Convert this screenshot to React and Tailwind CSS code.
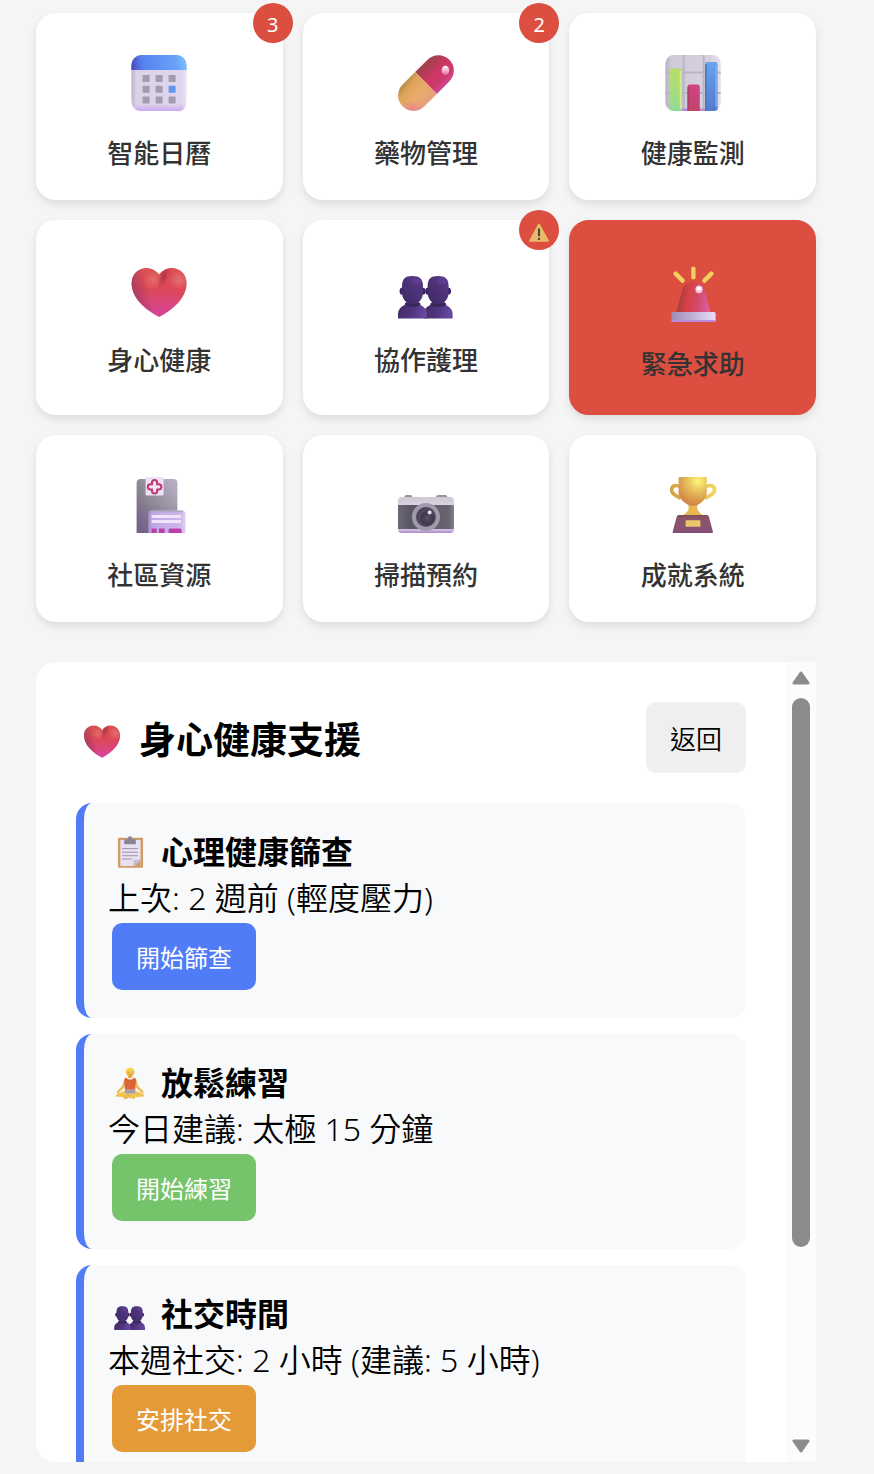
import { useId } from "react";

function Svg({ className, children }) {
  return (
    <svg viewBox="0 0 32 32" className={className} aria-hidden="true">
      {children}
    </svg>
  );
}

function CalendarIcon({ className }) {
  const id = useId();
  return (
    <Svg className={className}>
      <defs>
        <linearGradient id={id + "h"} x1="2" y1="8" x2="30" y2="4" gradientUnits="userSpaceOnUse">
          <stop stopColor="#4a48b8" />
          <stop offset=".2" stopColor="#5580ee" />
          <stop offset=".8" stopColor="#6aa2f8" />
          <stop offset="1" stopColor="#7cc4ff" />
        </linearGradient>
        <linearGradient id={id + "b"} x1="2" y1="0" x2="30" y2="0" gradientUnits="userSpaceOnUse">
          <stop stopColor="#b9b2c4" />
          <stop offset=".1" stopColor="#dbd2e8" />
          <stop offset=".9" stopColor="#dfd5ec" />
          <stop offset="1" stopColor="#eee4f6" />
        </linearGradient>
        <linearGradient id={id + "p"} x1="0" y1="26.5" x2="0" y2="30" gradientUnits="userSpaceOnUse">
          <stop stopColor="#cda8f2" stopOpacity="0" />
          <stop offset="1" stopColor="#cda8f2" />
        </linearGradient>
      </defs>
      <rect x="2.2" y="2" width="27.6" height="28" rx="5" fill={`url(#${id}b)`} />
      <path d="M2.2 26.5h27.6A4 4 0 0 1 25 30H7a4.8 4.8 0 0 1-4.8-3.5Z" fill={`url(#${id}p)`} />
      <path d="M2.2 9.5V7a5 5 0 0 1 5-5h17.6a5 5 0 0 1 5 5v2.5Z" fill={`url(#${id}h)`} />
      <g fill="#a29cb0">
        {[7.8, 14.3, 20.8].map((x) =>
          [12, 17.4, 22.7].map((y) => (
            <rect key={x + "-" + y} x={x} y={y} width="3.5" height="3.5" rx=".3" fill={x > 20 && y > 17 && y < 18 ? "#5f98ee" : "#a29cb0"} />
          ))
        )}
      </g>
    </Svg>
  );
}

function PillIcon({ className }) {
  const id = useId();
  return (
    <Svg className={className}>
      <defs>
        <linearGradient id={id + "r"} x1="0" y1="8.3" x2="0" y2="23.7" gradientUnits="userSpaceOnUse">
          <stop stopColor="#a3434e" />
          <stop offset=".2" stopColor="#ad3d50" />
          <stop offset=".45" stopColor="#cc3763" />
          <stop offset=".8" stopColor="#cf3a70" />
          <stop offset="1" stopColor="#cc4a9a" />
        </linearGradient>
        <linearGradient id={id + "y"} x1="3" y1="8.3" x2="5" y2="23.7" gradientUnits="userSpaceOnUse">
          <stop stopColor="#b58843" />
          <stop offset=".25" stopColor="#dda45c" />
          <stop offset=".65" stopColor="#e9ac6b" />
          <stop offset="1" stopColor="#e6a07c" />
        </linearGradient>
        <radialGradient id={id + "g"} cx="0" cy="22" r="7" gradientUnits="userSpaceOnUse">
          <stop stopColor="#e5789d" />
          <stop offset="1" stopColor="#e5789d" stopOpacity="0" />
        </radialGradient>
        <linearGradient id={id + "w"} x1="0" y1="0" x2="0" y2="1">
          <stop stopColor="#fff" />
          <stop offset="1" stopColor="#e06ba0" />
        </linearGradient>
      </defs>
      <g transform="rotate(-45 16 16)">
        <path d="M16 8.3h8.8a7.7 7.7 0 0 1 0 15.4H16Z" fill={`url(#${id}r)`} />
        <path d="M16 8.3H7.2a7.7 7.7 0 0 0 0 15.4H16Z" fill={`url(#${id}y)`} />
        <path d="M16 8.3H7.2a7.7 7.7 0 0 0 0 15.4H16Z" fill={`url(#${id}g)`} />
      </g>
      <ellipse cx="25.7" cy="9.7" rx="1.9" ry="2.3" fill={`url(#${id}w)`} />
    </Svg>
  );
}

function ChartIcon({ className }) {
  const id = useId();
  return (
    <Svg className={className}>
      <defs>
        <linearGradient id={id + "b"} x1="2" y1="0" x2="30" y2="0" gradientUnits="userSpaceOnUse">
          <stop stopColor="#b5afbf" />
          <stop offset=".12" stopColor="#cfcad8" />
          <stop offset=".8" stopColor="#d6d0df" />
          <stop offset="1" stopColor="#e8dff0" />
        </linearGradient>
        <linearGradient id={id + "g"} x1="0" y1="0" x2="0" y2="1">
          <stop stopColor="#b9de67" />
          <stop offset=".5" stopColor="#a9dc7a" />
          <stop offset="1" stopColor="#8edb9b" />
        </linearGradient>
        <linearGradient id={id + "r"} x1="0" y1="0" x2="0" y2="1">
          <stop stopColor="#d04488" />
          <stop offset="1" stopColor="#c2436a" />
        </linearGradient>
        <linearGradient id={id + "u"} x1="0" y1="0" x2="0" y2="1">
          <stop stopColor="#66a5f0" />
          <stop offset="1" stopColor="#5579cd" />
        </linearGradient>
      </defs>
      <rect x="2.2" y="2" width="27.7" height="28" rx="4.2" fill={`url(#${id}b)`} />
      <path d="M11.3 2v28M21.3 2v28M2.2 10.8h27.7M2.2 21h27.7" stroke="#bab4c4" strokeWidth="1" />
      <path d="M10.5 29.4h3M19 29.4h3.4" stroke="#b58bd8" strokeWidth="1.2" />
      <path d="M4.3 30V10a1.2 1.2 0 0 1 1.2-1.2h3.8a1.2 1.2 0 0 1 1.2 1.2v20H6.2a4 4 0 0 1-1.9-.6Z" fill={`url(#${id}g)`} />
      <path d="M9.8 10v19" stroke="#d2f08a" strokeWidth=".8" />
      <path d="M13.2 30V18a1.2 1.2 0 0 1 1.2-1.2h3.8a1.2 1.2 0 0 1 1.2 1.2v12Z" fill={`url(#${id}r)`} />
      <path d="M13.7 18v12" stroke="#a94163" strokeWidth=".8" />
      <path d="M22 30V6.7a1.2 1.2 0 0 1 1.2-1.2h3.9a1.2 1.2 0 0 1 1.2 1.2v22.7a4 4 0 0 1-2.2.6Z" fill={`url(#${id}u)`} />
      <path d="M22.5 6.5V30" stroke="#4b78bd" strokeWidth=".8" />
      <path d="M27.6 7v21" stroke="#78b0f2" strokeWidth=".8" />
    </Svg>
  );
}

const HEART = "M16.1 8.3C14.4 6.2 12.3 5 9.8 5 5.5 5 2.3 8.2 2.3 12.7c0 6.9 6.6 13 13.8 16.8 7.2-3.8 13.7-9.9 13.7-16.8C29.8 8.2 26.6 5 22.4 5c-2.5 0-4.7 1.2-6.3 3.3Z";

function HeartIcon({ className }) {
  const id = useId();
  return (
    <Svg className={className}>
      <defs>
        <linearGradient id={id + "a"} x1="0" y1="5" x2="0" y2="29.5" gradientUnits="userSpaceOnUse">
          <stop stopColor="#d9504f" />
          <stop offset=".45" stopColor="#dc4858" />
          <stop offset=".75" stopColor="#da4580" />
          <stop offset="1" stopColor="#d5449f" />
        </linearGradient>
        <linearGradient id={id + "b"} x1="3" y1="16" x2="10" y2="14" gradientUnits="userSpaceOnUse">
          <stop stopColor="#983a62" stopOpacity=".75" />
          <stop offset="1" stopColor="#983a62" stopOpacity="0" />
        </linearGradient>
        <radialGradient id={id + "c"} cx="13" cy="11" r="5" gradientUnits="userSpaceOnUse">
          <stop stopColor="#e46b6c" />
          <stop offset="1" stopColor="#e46b6c" stopOpacity="0" />
        </radialGradient>
        <radialGradient id={id + "d"} cx="26" cy="11" r="5" gradientUnits="userSpaceOnUse">
          <stop stopColor="#e46f74" />
          <stop offset="1" stopColor="#e46f74" stopOpacity="0" />
        </radialGradient>
        <radialGradient id={id + "e"} cx="0" cy="0" r="1" gradientTransform="translate(18.5 9) rotate(20) scale(2.5 7)" gradientUnits="userSpaceOnUse">
          <stop stopColor="#a63043" stopOpacity=".9" />
          <stop offset="1" stopColor="#b83245" stopOpacity="0" />
        </radialGradient>
      </defs>
      {["a", "b", "c", "d", "e"].map((k) => (
        <path key={k} d={HEART} fill={`url(#${id}${k})`} />
      ))}
    </Svg>
  );
}

function PeopleIcon({ className }) {
  const id = useId();
  const person = (
    <>
      <path d="M2 30.3V28c0-3.2 3-5.3 7.2-5.3s7.3 2.1 7.3 5.3v2.3Z" fill={`url(#${id}s)`} />
      <ellipse cx="9.3" cy="23.1" rx="4" ry="1.3" fill="#3a2559" />
      <ellipse cx="4" cy="16.6" rx="1.2" ry="1.7" fill="#3b2460" />
      <ellipse cx="14.5" cy="16.6" rx="1.2" ry="1.7" fill="#3b2460" />
      <path d="M4 14.2C4 10.5 5.5 9 9.2 9s5.3 1.5 5.3 5.2v3c0 3.5-2.5 5.9-5.3 5.9S4 20.7 4 17.2Z" fill={`url(#${id}h)`} />
      <ellipse cx="11.3" cy="11.5" rx="2.4" ry="1.5" fill="#63429a" opacity=".6" />
    </>
  );
  return (
    <Svg className={className}>
      <defs>
        <linearGradient id={id + "h"} x1="0" y1="1" x2="1" y2="0">
          <stop stopColor="#3f2a64" />
          <stop offset=".5" stopColor="#4b3175" />
          <stop offset="1" stopColor="#5b3c8c" />
        </linearGradient>
        <linearGradient id={id + "s"} x1="0" y1="0" x2="1" y2=".2">
          <stop stopColor="#42295f" />
          <stop offset=".6" stopColor="#523681" />
          <stop offset="1" stopColor="#65479c" />
        </linearGradient>
      </defs>
      <g transform="translate(12.8 0)">{person}</g>
      {person}
    </Svg>
  );
}

function SirenIcon({ className }) {
  const id = useId();
  return (
    <Svg className={className}>
      <defs>
        <linearGradient id={id + "d"} x1="9" y1="18" x2="24" y2="20" gradientUnits="userSpaceOnUse">
          <stop stopColor="#a0413e" />
          <stop offset=".25" stopColor="#d63f42" />
          <stop offset=".6" stopColor="#d34a66" />
          <stop offset="1" stopColor="#dc5e9c" />
        </linearGradient>
        <linearGradient id={id + "b"} x1="0" y1="0" x2="1" y2="0">
          <stop stopColor="#a08db5" />
          <stop offset=".5" stopColor="#c3b2d8" />
          <stop offset="1" stopColor="#eadcf9" />
        </linearGradient>
      </defs>
      <path d="M16.2 3.4v4.2M7.3 5.8l3.5 3.5M25.2 5.8l-3.5 3.5" stroke="#f2cf5e" strokeWidth="2.2" strokeLinecap="round" />
      <path d="M7.6 25.4 10.5 14.5c.8-3 3-4.5 5.7-4.5s5 1.5 5.8 4.5l2.8 10.9Z" fill={`url(#${id}d)`} />
      <ellipse cx="19" cy="13.7" rx="1.8" ry="1.9" fill="#f2c5dc" />
      <ellipse cx="19" cy="13.2" rx="1.2" ry="1" fill="#fff" />
      <rect x="5.2" y="25" width="22.1" height="5" rx=".8" fill={`url(#${id}b)`} />
      <path d="M5.4 29.5h21.7" stroke="#b98be0" strokeWidth=".9" />
    </Svg>
  );
}

function HospitalIcon({ className }) {
  const id = useId();
  return (
    <Svg className={className}>
      <defs>
        <linearGradient id={id + "a"} x1="5" y1="24" x2="25" y2="8" gradientUnits="userSpaceOnUse">
          <stop stopColor="#74638d" />
          <stop offset=".35" stopColor="#87808f" />
          <stop offset="1" stopColor="#b5adbf" />
        </linearGradient>
        <linearGradient id={id + "b"} x1="0" y1="0" x2="1" y2="0">
          <stop stopColor="#ad93cf" />
          <stop offset=".15" stopColor="#c2a9e6" />
          <stop offset=".85" stopColor="#ccb5ea" />
          <stop offset="1" stopColor="#dccdf0" />
        </linearGradient>
      </defs>
      <path d="M4.8 30V5a2 2 0 0 1 2-2h16.4a2 2 0 0 1 2 2v25Z" fill={`url(#${id}a)`} />
      <rect x="9.3" y="2" width="9" height="9.3" rx=".8" fill="#ece1f8" />
      <path d="M12.5 5.6V4.8a1.3 1.3 0 0 1 2.6 0v.8h.8a1.3 1.3 0 0 1 0 2.6h-.8v.8a1.3 1.3 0 0 1-2.6 0v-.8h-.8a1.3 1.3 0 0 1 0-2.6Z" fill="#efe3f5" stroke="#c2356a" strokeWidth="1" />
      <path d="M10.7 30V20.5a1.7 1.7 0 0 1 1.7-1.7h15.1a1.7 1.7 0 0 1 1.7 1.7V30Z" fill={`url(#${id}b)`} />
      <path d="M12 19.2h16" stroke="#b3a6c2" strokeWidth=".8" />
      <path d="M12.3 21.7H27M12.3 24.2H27" stroke="#f1e4fd" strokeWidth="1.5" />
      <path d="M12.3 30v-2.2h2.5V30ZM16 30v-2.2h2.8V30ZM20.8 30v-1.7l.6-.5h5.4l.5.5V30Z" fill="#bd3fab" />
    </Svg>
  );
}

function CameraIcon({ className }) {
  const id = useId();
  return (
    <Svg className={className}>
      <defs>
        <linearGradient id={id + "s"} x1="0" y1="12" x2="0" y2="30" gradientUnits="userSpaceOnUse">
          <stop stopColor="#cdc8d2" />
          <stop offset=".2" stopColor="#d8d2e2" />
          <stop offset=".9" stopColor="#d5c5ec" />
          <stop offset="1" stopColor="#a98abf" />
        </linearGradient>
        <linearGradient id={id + "d"} x1="0" y1="0" x2="1" y2="0">
          <stop stopColor="#6d6877" />
          <stop offset=".2" stopColor="#5a5664" />
          <stop offset=".9" stopColor="#666270" />
          <stop offset="1" stopColor="#85818e" />
        </linearGradient>
        <radialGradient id={id + "l"} cx=".55" cy=".55" r=".55">
          <stop stopColor="#5b5066" />
          <stop offset=".45" stopColor="#3f364b" />
          <stop offset=".6" stopColor="#554a62" />
          <stop offset="1" stopColor="#453a52" />
        </radialGradient>
      </defs>
      <path d="M5.2 12.5v-.6a1 1 0 0 1 1-.9h2a1 1 0 0 1 1 .9v.6ZM21 12.5v-.6a1 1 0 0 1 1-.9h3.7a1 1 0 0 1 1 .9v.6Z" fill="#99939d" />
      <rect x="2" y="12" width="28" height="18" rx="2" fill={`url(#${id}s)`} />
      <rect x="2" y="16" width="28" height="12" fill={`url(#${id}d)`} />
      <circle cx="16" cy="22" r="6" fill={`url(#${id}l)`} stroke="#a09ba9" strokeWidth="2" />
      <circle cx="17.8" cy="19.7" r="1" fill="#e9e4ef" />
    </Svg>
  );
}

function TrophyIcon({ className }) {
  const id = useId();
  return (
    <Svg className={className}>
      <defs>
        <radialGradient id={id + "c"} cx="18.5" cy="4" r="13" gradientUnits="userSpaceOnUse">
          <stop stopColor="#fcf877" />
          <stop offset=".45" stopColor="#e5bb5c" />
          <stop offset=".85" stopColor="#d48c46" />
          <stop offset="1" stopColor="#cf8356" />
        </radialGradient>
        <linearGradient id={id + "h"} x1="4" y1="0" x2="28" y2="0" gradientUnits="userSpaceOnUse">
          <stop stopColor="#d3a045" />
          <stop offset="1" stopColor="#f3d65c" />
        </linearGradient>
        <linearGradient id={id + "b"} x1="0" y1="0" x2="0" y2="1">
          <stop stopColor="#7b4b5b" />
          <stop offset=".2" stopColor="#8b5568" />
          <stop offset="1" stopColor="#874f78" />
        </linearGradient>
      </defs>
      <path d="M9.6 6.9C7.8 5.700 5.300 6.100 5.300 8.500c0 2 2.300 2.800 4.600 4.200M22.200 6.900c1.900-1.200 4.600-.8 4.600 1.600 0 2-2.500 2.800-4.900 4.200" fill="none" stroke={`url(#${id}h)`} strokeWidth="1.800" />
      <path d="M13.500 15.800h4.800c-.7 2.200.2 3.800 2.700 5.300H11c2.500-1.500 3.400-3.100 2.500-5.300Z" fill="#e8b84e" />
      <path d="M9.300 2h13.100a.5.500 0 0 1 .5.500v7.400c0 3-3.600 6.600-6.900 6.600s-7.200-3.600-7.200-6.600V2.500A.5.500 0 0 1 9.300 2Z" fill={`url(#${id}c)`} />
      <path d="M7.800 22a1.200 1.200 0 0 1 1.200-1h13.800a1.200 1.200 0 0 1 1.200 1l2 7.500a.5.500 0 0 1-.5.500H6.300a.5.500 0 0 1-.5-.5Z" fill={`url(#${id}b)`} />
      <rect x="12.300" y="23.600" width="7.400" height="3.300" rx=".3" fill="#e9c869" />
    </Svg>
  );
}

function WarningIcon({ className }) {
  const id = useId();
  return (
    <Svg className={className}>
      <defs>
        <linearGradient id={id + "w"} x1="0" y1="0" x2="0" y2="1">
          <stop stopColor="#dcc45e" />
          <stop offset="1" stopColor="#f0b56e" />
        </linearGradient>
      </defs>
      <path d="M14.900 4.400a1.300 1.300 0 0 1 2.200 0l13.400 24.200a1 1 0 0 1-.9 1.500H2.400a1 1 0 0 1-.9-1.500Z" fill={`url(#${id}w)`} />
      <path d="M16 12v9" stroke="#4c4540" strokeWidth="3" strokeLinecap="round" />
      <circle cx="16" cy="26" r="1.700" fill="#4c4540" />
    </Svg>
  );
}

function ClipboardIcon({ className }) {
  return (
    <Svg className={className}>
      <rect x="5.300" y="3.300" width="22.300" height="26.700" rx="1" fill="#cf9d68" />
      <rect x="7.400" y="5.300" width="18" height="23.200" rx=".5" fill="#e9e0f2" />
      <path d="M19 28.500v-5.700h6.400v.3L20 28.500Z" fill="#c7bdd6" />
      <path d="M25.400 23.100v5.400H20Z" fill="#cf9d68" />
      <path d="M8.900 13h14.200M8.900 16.200h14.200M8.900 19.300h14.200M8.900 22.200h9" stroke="#948c9f" strokeWidth=".8" />
      <circle cx="16" cy="4" r="1.900" fill="#8b8494" />
      <path d="M10.800 9V6.500a2 2 0 0 1 2-2h6.400a2 2 0 0 1 2 2V9Z" fill="#8b8494" />
    </Svg>
  );
}

function MeditateIcon({ className }) {
  return (
    <Svg className={className}>
      <path d="M14.300 9h3.600v2.500h-3.600Z" fill="#dba63e" />
      <path d="M11.800 13 9.900 19.500 5.200 24M20.500 13l1.900 6.500 4.700 4.500" fill="none" stroke="#ecba4b" strokeWidth="2.100" strokeLinecap="round" strokeLinejoin="round" />
      <path d="M10.900 13.500c0-1.200.6-2 1.800-2.500.7 1.200 1.800 1.800 3.400 1.800s2.700-.6 3.400-1.800c1.200.5 1.800 1.300 1.800 2.500l-.6 8.500h-9.200Z" fill="#d96438" />
      <path d="M11.500 22h9.300l.5 3.500H11Z" fill="#a59bab" />
      <path d="M11.200 22.800 4.600 25.600c-1.500.7-1.400 2.600.4 2.700l5.600.2c2.800.4 5.200 1.100 8.500 1.600 1.500.2 1.900-1 1.200-1.700l6.700-.1c1.800-.1 2-2 .5-2.700l-6.600-2.800-.5 2.700h-8.700Z" fill="#f0c451" />
      <path d="M16 26.800c-2 .3-3.800.9-5.200 1.700-.8.600-.3 1.600.9 1.400l2.500-.7" fill="#f3cc58" stroke="#d99a3c" strokeWidth=".6" />
      <circle cx="16.100" cy="6.700" r="3.700" fill="#f0c04f" />
      <path d="M12.200 6.500c-.4-2.700 1.300-4.100 3.900-4.100s4.300 1.400 3.900 4.100c-.8-1.200-1.800-1.700-3.900-1.700s-3.100.5-3.900 1.700Z" fill="#f2d552" />
      <path d="M14.500 7.200h.6M17.200 7.200h.6M15.200 9h1.900" stroke="#8a5a2a" strokeWidth=".6" />
    </Svg>
  );
}

const TILES = [
  { label: "智能日曆", Icon: CalendarIcon, badge: "3" },
  { label: "藥物管理", Icon: PillIcon, badge: "2" },
  { label: "健康監測", Icon: ChartIcon },
  { label: "身心健康", Icon: HeartIcon },
  { label: "協作護理", Icon: PeopleIcon, badge: <WarningIcon className="size-[22px]" /> },
  { label: "緊急求助", Icon: SirenIcon, emergency: true },
  { label: "社區資源", Icon: HospitalIcon },
  { label: "掃描預約", Icon: CameraIcon },
  { label: "成就系統", Icon: TrophyIcon },
];

const ITEMS = [
  { title: "心理健康篩查", Icon: ClipboardIcon, text: "上次: 2 週前 (輕度壓力)", action: "開始篩查", color: "bg-[#507cf7]" },
  { title: "放鬆練習", Icon: MeditateIcon, text: "今日建議: 太極 15 分鐘", action: "開始練習", color: "bg-[#75c36a]" },
  { title: "社交時間", Icon: PeopleIcon, text: "本週社交: 2 小時 (建議: 5 小時)", action: "安排社交", color: "bg-[#e59a38]" },
];

function Tile({ label, Icon, badge, emergency }) {
  return (
    <button
      type="button"
      className={
        "relative flex flex-col items-center rounded-[20px] shadow-[0_4px_8px_rgba(0,0,0,0.1)] " +
        (emergency ? "border-4 border-[#dc4e3f] bg-[#dc4e3f]" : "bg-white")
      }
    >
      <span className="flex flex-col items-center gap-5 pt-[38px] pb-7">
        <Icon className="size-16" />
        <span className="text-[26px] leading-[37px] font-medium text-[#333]">{label}</span>
      </span>
      {badge && (
        <span className="absolute -top-[10px] -right-[10px] flex size-10 items-center justify-center rounded-full bg-[#dc4e3f] pt-1 text-xl leading-6 text-white">
          {badge}
        </span>
      )}
    </button>
  );
}

function SupportItem({ title, Icon, text, action, color }) {
  return (
    <article className="flex flex-col items-start rounded-2xl border-l-8 border-[#507cf7] bg-[#f8f9fb] p-6">
      <h3 className="flex items-center gap-[9px] text-[32px] leading-[50px] font-bold">
        <span className="flex w-11 justify-center">
          <Icon className="size-9" />
        </span>
        {title}
      </h3>
      <p className="text-[32px] leading-[42px] font-[350]">{text}</p>
      <button type="button" className={"m-1 rounded-[10px] px-6 pt-[17px] pb-[15px] text-2xl leading-[35px] text-white " + color}>
        {action}
      </button>
    </article>
  );
}

function ScrollBar() {
  return (
    <div className="flex w-[30px] shrink-0 flex-col items-center bg-[#fcfcfc] py-2" aria-hidden="true">
      <svg viewBox="0 0 18 16" className="h-4 w-[18px]">
        <path d="M9 3 2 13h14Z" fill="#8b8b8b" stroke="#8b8b8b" strokeWidth="3" strokeLinejoin="round" />
      </svg>
      <div className="mt-3 mb-2 w-[18px] flex-1">
        <div className="h-3/4 rounded-full bg-[#8b8b8b]" />
      </div>
      <svg viewBox="0 0 18 16" className="h-4 w-[18px]">
        <path d="M9 13 2 3h14Z" fill="#8b8b8b" stroke="#8b8b8b" strokeWidth="3" strokeLinejoin="round" />
      </svg>
    </div>
  );
}

export default function App() {
  return (
    <main
      lang="zh-Hant"
      className="min-h-screen bg-[#f5f5f5] pt-[13px] pr-[58px] pb-3 pl-9 font-['Noto_Sans','Noto_Sans_CJK_TC',sans-serif] text-black"
    >
      <nav className="grid grid-cols-3 gap-5">
        {TILES.map((tile) => (
          <Tile key={tile.label} {...tile} />
        ))}
      </nav>

      <section className="mt-10 flex max-h-[800px] overflow-hidden rounded-l-[20px] bg-white">
        <div className="flex-1 overflow-y-auto p-10 [scrollbar-width:none]">
          <header className="mb-[30px] flex items-center justify-between">
            <h2 className="flex items-center gap-3 pt-1 text-[37px] leading-[52px] font-bold">
              <span className="flex w-[51px] justify-center">
                <HeartIcon className="size-[42px]" />
              </span>
              身心健康支援
            </h2>
            <button type="button" className="rounded-[10px] bg-[#efefef] px-6 pt-[18px] pb-[14px] text-[26px] leading-[39px] font-[350]">
              返回
            </button>
          </header>
          <div className="flex flex-col gap-4">
            {ITEMS.map((item) => (
              <SupportItem key={item.title} {...item} />
            ))}
          </div>
        </div>
        <ScrollBar />
      </section>
    </main>
  );
}
